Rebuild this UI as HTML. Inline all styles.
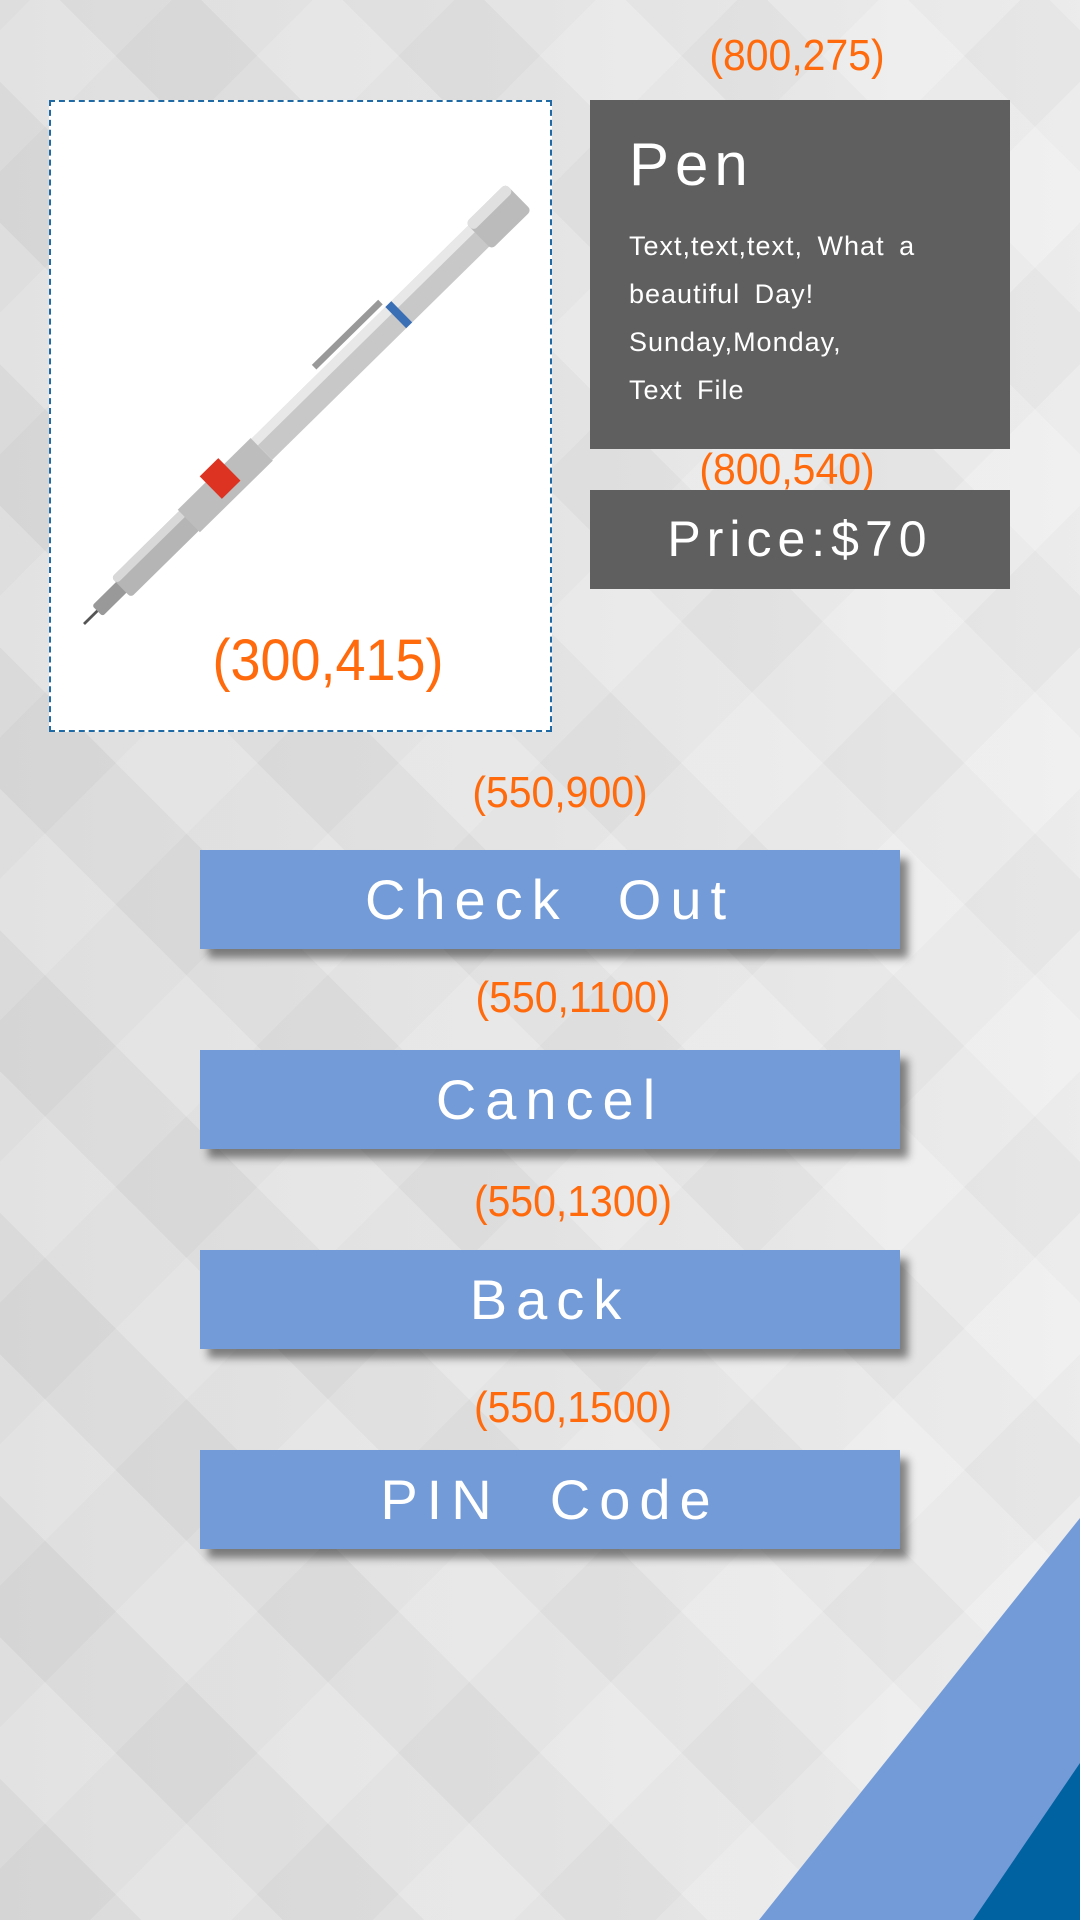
<!DOCTYPE html>
<html><head><meta charset="utf-8"><style>
html,body{margin:0;padding:0}
body{width:1080px;height:1920px;position:relative;overflow:hidden;font-family:"Liberation Sans",sans-serif;
background:
repeating-linear-gradient(45deg,rgba(255,255,255,0) 0 100px,rgba(255,255,255,.22) 100px 200px),
repeating-linear-gradient(-45deg,rgba(0,0,0,0) 0 100px,rgba(0,0,0,.025) 100px 200px),
linear-gradient(90deg,#dadada,#e4e4e4 60%,#ececec);}
.lbl{position:absolute;color:#ff6a0d;font-size:44px;transform:translateX(-50%) scaleX(.93);white-space:nowrap;line-height:1}
.box{position:absolute}
.btn{position:absolute;left:200px;width:700px;height:99px;background:#739bd8;color:#fff;font-size:56px;letter-spacing:9px;text-align:center;line-height:99px;box-shadow:8px 9px 8px rgba(0,0,0,.45)}
</style></head><body>
<div class="box" style="left:49px;top:100px;width:499px;height:628px;background:#fff;border:2px dashed #1f6aa5"></div>
<svg class="box" style="left:0;top:0" width="1080" height="800">
<g transform="translate(84,624) rotate(-44.5) scale(.93)">
<line x1="0" y1="0" x2="22" y2="0" stroke="#555" stroke-width="3"/>
<rect x="20" y="-8" width="40" height="16" fill="#999" rx="3"/>
<rect x="56" y="-15" width="105" height="30" fill="#b5b5b5" rx="4"/>
<rect x="56" y="-15" width="105" height="9" fill="#d8d8d8" rx="4"/>
<rect x="158" y="-17" width="110" height="34" fill="#bdbdbd"/>
<rect x="200" y="-26" width="28" height="34" fill="#d32" />
<rect x="268" y="-16" width="330" height="32" fill="#c8c8c8"/>
<rect x="268" y="-16" width="330" height="10" fill="#e8e8e8"/>
<rect x="470" y="-16" width="9" height="32" fill="#3a6fb5"/>
<rect x="370" y="-27" width="100" height="7" fill="#999"/>
<rect x="595" y="-20" width="60" height="40" fill="#bbb" rx="5"/>
<rect x="595" y="-20" width="60" height="12" fill="#e0e0e0" rx="5"/>
</g></svg>
<div class="lbl" style="left:328px;top:632px;font-size:58px">(300,415)</div>
<div class="lbl" style="left:797px;top:34px">(800,275)</div>
<div class="box" style="left:590px;top:100px;width:420px;height:349px;background:#5f5f5f;color:#fff">
<div style="position:absolute;left:39px;top:30px;font-size:60px;letter-spacing:6px">Pen</div>
<div style="position:absolute;left:39px;top:122px;font-size:27px;line-height:48px;letter-spacing:1px;word-spacing:6px">Text,text,text, What a<br>beautiful Day!<br>Sunday,Monday,<br>Text File</div>
</div>
<div class="lbl" style="left:787px;top:448px">(800,540)</div>
<div class="box" style="left:590px;top:490px;width:420px;height:99px;background:#5f5f5f;color:#fff;font-size:50px;letter-spacing:6px;text-align:center;line-height:99px">Price:$70</div>
<div class="lbl" style="left:560px;top:771px">(550,900)</div>
<div class="btn" style="top:850px">Check&nbsp; Out</div>
<div class="lbl" style="left:573px;top:976px">(550,1100)</div>
<div class="btn" style="top:1050px">Cancel</div>
<div class="lbl" style="left:573px;top:1180px">(550,1300)</div>
<div class="btn" style="top:1250px">Back</div>
<div class="lbl" style="left:573px;top:1386px">(550,1500)</div>
<div class="btn" style="top:1450px">PIN&nbsp; Code</div>
<svg class="box" style="left:0;top:0" width="1080" height="1920">
<polygon points="1080,1518 1080,1920 759,1920" fill="#739bd8"/>
<polygon points="1080,1763 1080,1920 973,1920" fill="#0062a0"/>
</svg>
</body></html>
